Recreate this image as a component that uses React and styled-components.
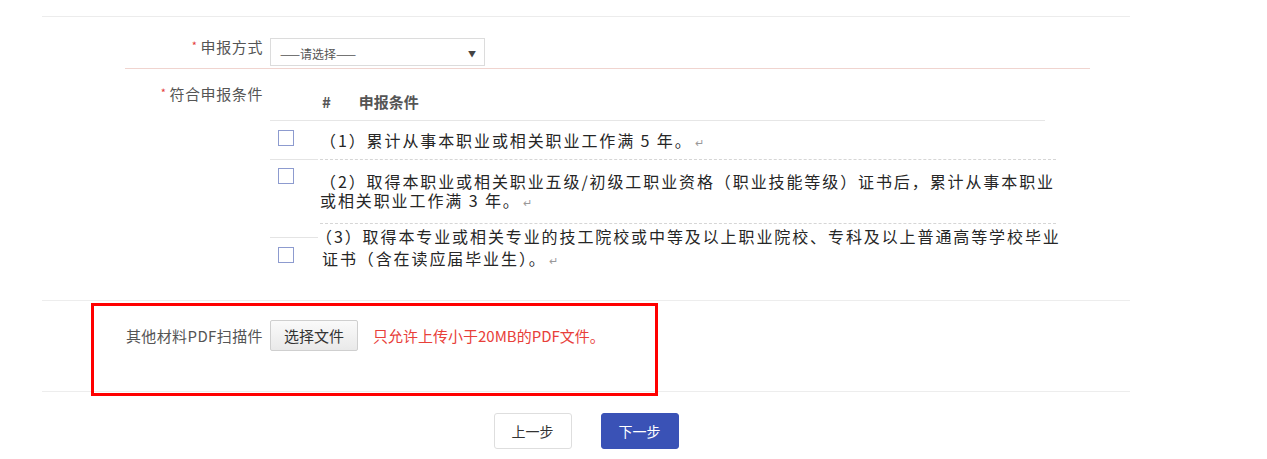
import React from "react";
import styled, { createGlobalStyle } from "styled-components";

const GlobalStyle = createGlobalStyle`
  body {
    margin: 0;
    background: #fff;
    font-family: "Noto Sans CJK SC", "Noto Sans", "Liberation Sans", sans-serif;
    color: #333;
  }
`;

const Page = styled.div`
  width: 1088px;
  margin-left: 42px;
  padding-top: 16px;
`;

const TopRule = styled.div`
  border-top: 1px solid #ececec;
`;

const FieldRow = styled.div`
  display: flex;
  align-items: flex-start;
  gap: 7px;
  margin-left: 83px;
  width: ${(p) => p.width || "auto"};
  padding: ${(p) => p.pad || "0"};
  border-bottom: ${(p) => (p.underline ? "1px solid #f0d4cf" : "none")};
`;

const Label = styled.div`
  width: 138px;
  flex-shrink: 0;
  display: flex;
  justify-content: flex-end;
  align-items: baseline;
  white-space: nowrap;
  font-size: 15px;
  letter-spacing: ${(p) => p.spacing || "0.6px"};
  line-height: 22px;
  color: #555;
`;

const Star = styled.span`
  color: #e4393c;
  font-size: 11px;
  margin-right: 3px;
  position: relative;
  top: -3px;
`;

const Select = styled.div`
  width: 215px;
  height: 28px;
  margin-top: 2px;
  box-sizing: border-box;
  border: 1px solid #dcdcdc;
  display: flex;
  align-items: center;
  justify-content: space-between;
  padding: 2px 8px 0 9px;
  font-size: 12px;
  color: #555;
`;

const Caret = styled.span`
  font-size: 8px;
  color: #444;
`;

const Section = styled.div`
  position: relative;
  border-bottom: 1px solid #ededed;
  height: ${(p) => p.h};
  box-sizing: border-box;
`;

const Table = styled.div`
  width: 786px;
`;

const HeadRow = styled.div`
  display: flex;
  width: 775px;
  gap: 28px;
  padding: 6px 0 5px 52px;
  box-sizing: border-box;
  line-height: 26px;
  border-bottom: 1px solid #e6e6e6;
  font-size: 15px;
  font-weight: 700;
  color: #555;
`;

const Row = styled.div`
  display: flex;
  align-items: stretch;
`;

const CheckCell = styled.div`
  width: 48px;
  flex-shrink: 0;
  box-sizing: border-box;
  padding: ${(p) => p.pad} 0 0 8px;
  border-bottom: ${(p) => (p.bottom ? "1px solid #e4e4e4" : "none")};
  border-top: ${(p) => (p.top ? "1px solid #e4e4e4" : "none")};
  margin-top: ${(p) => (p.top ? "13px" : "0")};
`;

const Box = styled.span`
  display: block;
  width: 16px;
  height: 16px;
  box-sizing: border-box;
  border: 1.5px solid #8d9bcf;
  background: #fff;
`;

const TextCell = styled.div`
  flex: 1;
  margin-left: 2px;
  padding: ${(p) => p.pad};
  border-bottom: ${(p) => (p.dashed ? "1px dashed #d6d6d6" : "none")};
  font-size: 16px;
  letter-spacing: 1.9px;
  line-height: ${(p) => p.lh};
  color: #262626;
  white-space: nowrap;
`;

const Line = styled.span`
  display: block;
  margin-left: ${(p) => p.shift || "0"};
`;

const Mark = styled.span`
  font-size: 11px;
  color: #999;
  margin-left: 2px;
`;

const UploadRow = styled(FieldRow)`
  align-items: center;
`;

const FileButton = styled.button`
  width: 88px;
  height: 31px;
  border: 1px solid #cfcfcf;
  border-radius: 2px;
  background: linear-gradient(#fafafa, #e9e9e9);
  font-family: inherit;
  font-size: 15px;
  color: #333;
  padding: 0;
`;

const Hint = styled.span`
  margin-left: 8px;
  font-size: 15px;
  color: #e8403a;
`;

const Highlight = styled.div`
  position: absolute;
  left: 49px;
  top: 2px;
  width: 567px;
  height: 93px;
  box-sizing: border-box;
  border: 3px solid #f00;
  pointer-events: none;
`;

const ButtonBar = styled.div`
  display: flex;
  justify-content: center;
  gap: 29px;
  padding-top: 21px;
`;

const StepButton = styled.button`
  width: 78px;
  height: 36px;
  border-radius: 3px;
  font-family: inherit;
  font-size: 14px;
  padding: 0;
  border: 1px solid ${(p) => (p.primary ? "#3a52b6" : "#dedede")};
  background: ${(p) => (p.primary ? "#3a52b6" : "#fff")};
  color: ${(p) => (p.primary ? "#fff" : "#333")};
`;

const conditions = [
  {
    check: { pad: "9px", bottom: true },
    text: { pad: "9px 0 7px", lh: "20px", dashed: true },
    lines: [["（1）累计从事本职业或相关职业工作满 5 年。", "0"]],
  },
  {
    check: { pad: "8px" },
    text: { pad: "12px 0 11px", lh: "19px", dashed: true },
    lines: [
      ["（2）取得本职业或相关职业五级/初级工职业资格（职业技能等级）证书后，累计从事本职业", "0"],
      ["或相关职业工作满 3 年。", "0"],
    ],
  },
  {
    check: { pad: "9px", top: true },
    text: { pad: "1px 0 8px", lh: "22px" },
    lines: [
      ["（3）取得本专业或相关专业的技工院校或中等及以上职业院校、专科及以上普通高等学校毕业", "-4px"],
      ["证书（含在读应届毕业生）。", "2px"],
    ],
  },
];

export default function App() {
  return (
    <>
      <GlobalStyle />
      <Page>
        <TopRule />
        <FieldRow underline width="965px" pad="19px 0 2px">
          <Label>
            <Star>*</Star>申报方式
          </Label>
          <Select>
            <span>——请选择——</span>
            <Caret>▼</Caret>
          </Select>
        </FieldRow>

        <Section h="232px">
          <FieldRow pad="14px 0 0">
            <Label>
              <Star>*</Star>符合申报条件
            </Label>
            <Table>
              <HeadRow>
                <span>#</span>
                <span>申报条件</span>
              </HeadRow>
              {conditions.map((c, i) => (
                <Row key={i}>
                  <CheckCell {...c.check}>
                    <Box />
                  </CheckCell>
                  <TextCell {...c.text}>
                    {c.lines.map(([t, shift], j) => (
                      <Line key={j} shift={shift}>
                        {t}
                        {j === c.lines.length - 1 && <Mark>↵</Mark>}
                      </Line>
                    ))}
                  </TextCell>
                </Row>
              ))}
            </Table>
          </FieldRow>
        </Section>

        <Section h="91px">
          <UploadRow pad="19px 0 0">
            <Label spacing="0.4px">其他材料PDF扫描件</Label>
            <FileButton>选择文件</FileButton>
            <Hint>只允许上传小于20MB的PDF文件。</Hint>
          </UploadRow>
          <Highlight />
        </Section>

        <ButtonBar>
          <StepButton>上一步</StepButton>
          <StepButton primary>下一步</StepButton>
        </ButtonBar>
      </Page>
    </>
  );
}
